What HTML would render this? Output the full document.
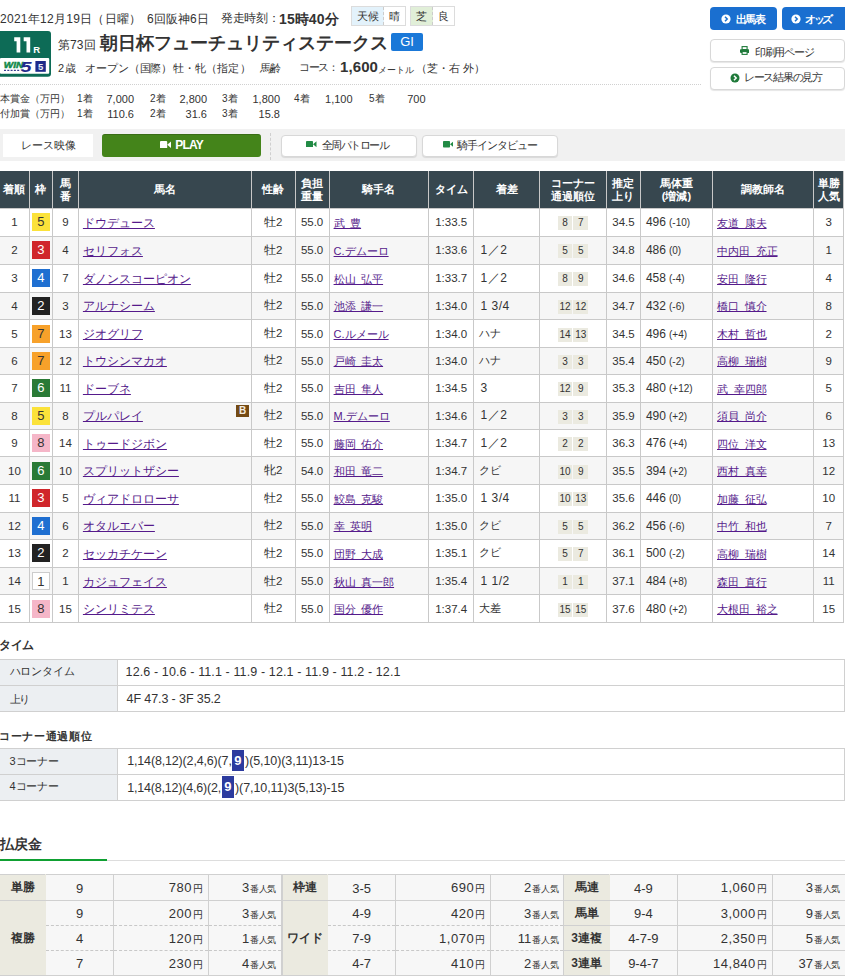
<!DOCTYPE html>
<html lang="ja"><head><meta charset="utf-8">
<style>
*{box-sizing:border-box;margin:0;padding:0}
html,body{width:845px;height:976px;overflow:hidden;background:#fff}
body{font-family:"Liberation Sans",sans-serif;color:#333;font-size:12px;position:relative}
.abs{position:absolute;white-space:nowrap}
a{color:#551a8b;text-decoration:underline}
/* header */
.t12{font-size:12px;line-height:14px}
.wx{position:absolute;top:6px;height:20px;border:1px solid #dcdcdc;font-size:11px;line-height:18px;background:#fff}
.wx span{position:absolute;top:0;height:18px;text-align:center}
.racebox{left:0;top:31px;width:51px;height:46px;background:#0e6b57;border-radius:0 5px 5px 0}
.racebox .num{position:absolute;left:14px;top:3px;color:#fff;font-weight:bold;font-size:21px;line-height:22px;letter-spacing:-1px}
.racebox .num small{font-size:9px;letter-spacing:0;margin-left:2px}
.racebox .w5{position:absolute;left:0;top:26px;width:49px;height:17px;background:#fff;border-radius:0 0 3px 0}
.gi{position:absolute;left:391px;top:33px;width:32px;height:17.7px;background:#1a78d8;color:#fff;font-size:13px;line-height:17.7px;text-align:center;border-radius:2px}
.dots{left:0;top:84px;width:701px;border-top:1px dotted #d0d0d0}
.btn{position:absolute;border-radius:4px;text-align:center;font-size:12px;white-space:nowrap}
.bb{background:#1a6fd0;color:#fff;font-weight:bold}
.bwh{background:#fff;border:1px solid #d8d8d8;color:#333;box-shadow:0 1px 1px rgba(0,0,0,.10)}
/* video band */
.band{left:0;top:129px;width:845px;height:32px;background:#f1f1f1}
/* result table */
table.res{position:absolute;left:0;top:171px;border-collapse:collapse;table-layout:fixed;width:844px}
table.res th{background:#37474f;color:#fff;font-weight:bold;font-size:11px;line-height:13px;height:37px;border-left:1px solid #c8c8c8;border-right:1px solid #c8c8c8;text-align:center;padding:1px 0 0 0}
table.res th:first-child{border-left:none}
table.res td{border:1px solid #c9c9c9;font-size:11.5px;padding:0;white-space:nowrap;overflow:hidden}
table.res td:first-child{border-left:none}
table.res tr.ev td{background:#f6f6f6}
td.c{text-align:center}
td.nm{padding-left:4px!important;position:relative;font-size:11.7px!important;padding-top:2px!important}
td.jk{padding-left:4px!important;font-size:11px!important;padding-top:2px!important}
td.mg{padding-left:4px!important;font-size:11px!important}
.mgd{font-size:12px;margin-left:2px;letter-spacing:0.5px}
.mgj{font-size:10.5px;margin-left:0.5px}
td.bw{padding-left:5px!important;font-size:12px!important}
td.bw small{font-size:10px;margin-left:3px}
.wk{display:inline-block;width:18px;height:18px;line-height:18px;text-align:center;font-size:13px;vertical-align:middle}
.cn{display:inline-block;width:14.7px;height:14px;line-height:14px;background:#ebeae0;font-size:10px;margin:0 0.5px;vertical-align:middle;text-align:center;position:relative;top:1px}
.blk{position:absolute;right:1.5px;top:2.5px;width:13.8px;height:12.3px;background:#744a14;color:#f4ece0;font-size:10px;line-height:12.3px;text-align:center;font-weight:bold}
/* time */
.h3{left:0;font-size:13px;font-weight:bold;line-height:16px}
table.info{position:absolute;left:0;width:845px;border-collapse:collapse;table-layout:fixed}
table.info th{width:117px;background:#eceff2;border:1px solid #d0d0d0;border-left:none;font-weight:normal;text-align:left;padding-left:10px;font-size:12px;height:26px}
table.info td{border:1px solid #d0d0d0;padding-left:10px;font-size:12.5px;height:26px}
.hl{display:inline-block;background:#2c3aa8;color:#fff;font-weight:bold;width:12px;text-align:center;height:23px;line-height:23px;vertical-align:middle}
.payh{left:0;top:834px;font-size:14px;font-weight:bold;line-height:18px}
.gline{left:0;top:860px;width:845px;height:1px;background:#ddd}
.gline2{left:0;top:859px;width:107px;height:2px;background:#0fa032}
/* payout */
table.pay{position:absolute;top:874px;border-collapse:collapse;table-layout:fixed;width:282px}
table.pay td,table.pay th{border:1px solid #d0d0d0;font-size:13px;padding:1px 0 0 0;white-space:nowrap;color:#333}
table.pay th{background:#ebeae0;font-weight:bold;text-align:center;font-size:12px;border-right-color:#ebeae0;padding-top:0}
table.pay th.first{border-left:none}
table.pay td{background:#f7f7f7}
table.pay td.n{text-align:center}
table.pay td.y{text-align:right;padding-right:5px;letter-spacing:0.5px}
table.pay td.y small{font-size:9.5px;margin-left:1px;letter-spacing:0}
table.pay td.p{text-align:right;padding-right:5px}
table.pay td.p small{font-size:9px;margin-left:1px;letter-spacing:-0.4px}
table.pay tr.dt td{border-top:1px dashed #c8c8c8}
table.pay tr.db td{border-bottom:1px dashed #c8c8c8}
</style></head><body>

<div class="abs" id="s_d1" style="z-index:5;left:0.0px;top:12.0px;font-size:12px;line-height:14px;font-weight:400;letter-spacing:0.272px;">2021年12月19日（日曜）</div>
<div class="abs" id="s_d2" style="z-index:5;left:147.0px;top:12.0px;font-size:12px;line-height:14px;font-weight:400;letter-spacing:0.06px;">6回阪神6日</div>
<div class="abs" id="s_d3" style="z-index:5;left:221.0px;top:11.25px;font-size:12px;line-height:14px;font-weight:400;letter-spacing:-0.35px;">発走時刻：</div>
<div class="abs" id="s_d4" style="z-index:5;left:279px;top:10.5px;font-size:14px;line-height:16px;font-weight:700;letter-spacing:0.1px;">15時40分</div>
<div class="abs" id="s_t1" style="z-index:5;left:58.0px;top:38.0px;font-size:12px;line-height:14px;font-weight:400;letter-spacing:0.097px;">第73回</div>
<div class="abs" id="s_t2" style="z-index:5;left:100.0px;top:32.5px;font-size:18px;line-height:20px;font-weight:700;letter-spacing:0.021px;">朝日杯フューチュリティステークス</div>
<div class="abs" id="s_u1" style="z-index:5;left:58.0px;top:62.25px;font-size:11px;line-height:13px;font-weight:400;letter-spacing:1.2px;">2歳</div>
<div class="abs" id="s_u2" style="z-index:5;left:85.0px;top:62.25px;font-size:11px;line-height:13px;font-weight:400;letter-spacing:-0.139px;">オープン</div>
<div class="abs" id="s_u3" style="z-index:5;left:129.0px;top:62.25px;font-size:11px;line-height:13px;font-weight:400;letter-spacing:-0.372px;">（国際）</div>
<div class="abs" id="s_u4" style="z-index:5;left:173.0px;top:62.25px;font-size:11px;line-height:13px;font-weight:400;letter-spacing:-0.25px;">牡・牝</div>
<div class="abs" id="s_u5" style="z-index:5;left:206px;top:62.25px;font-size:11px;line-height:13px;font-weight:400;letter-spacing:0.236px;">（指定）</div>
<div class="abs" id="s_u6" style="z-index:5;left:260px;top:62.25px;font-size:11px;line-height:13px;font-weight:400;letter-spacing:-0.7px;">馬齢</div>
<div class="abs" id="s_u7" style="z-index:5;left:299px;top:61.25px;font-size:11px;line-height:13px;font-weight:400;letter-spacing:-1.334px;">コース：</div>
<div class="abs" id="s_u8" style="z-index:5;left:340.0px;top:58.25px;font-size:15px;line-height:17px;font-weight:700;letter-spacing:0.1px;">1,600</div>
<div class="abs" id="s_u9" style="z-index:5;left:378.0px;top:64.75px;font-size:9px;line-height:11px;font-weight:400;letter-spacing:0.066px;">メートル</div>
<div class="abs" id="s_u10" style="z-index:5;left:415.6px;top:61.6px;font-size:11px;line-height:13px;font-weight:400;letter-spacing:0.019px;">（芝・右 外）</div>
<div class="abs" id="s_b1" style="z-index:5;left:735.6px;top:13.45px;font-size:10.5px;line-height:12.5px;font-weight:700;letter-spacing:-1.5px;color:#fff">出馬表</div>
<div class="abs" id="s_b2" style="z-index:5;left:805px;top:13.45px;font-size:10.5px;line-height:12.5px;font-weight:700;letter-spacing:-2.3px;color:#fff">オッズ</div>
<div class="abs" id="s_b3" style="z-index:5;left:754.8px;top:45.55px;font-size:10.5px;line-height:12.5px;font-weight:400;letter-spacing:-1.2px;">印刷用ページ</div>
<div class="abs" id="s_b4" style="z-index:5;left:744px;top:71.25px;font-size:10.5px;line-height:12.5px;font-weight:400;letter-spacing:-1.285px;">レース結果の見方</div>
<div class="abs" id="s_v1" style="z-index:5;left:21.2px;top:139.05px;font-size:11px;line-height:13px;font-weight:400;letter-spacing:0.0px;">レース映像</div>
<div class="abs" id="s_v2" style="z-index:5;left:175.2px;top:138.0px;font-size:12px;line-height:14px;font-weight:700;letter-spacing:-0.737px;color:#fff">PLAY</div>
<div class="abs" id="s_v3" style="z-index:5;left:321.5px;top:138.65px;font-size:10.5px;line-height:12.5px;font-weight:400;letter-spacing:-1.469px;">全周パトロール</div>
<div class="abs" id="s_v4" style="z-index:5;left:456.9px;top:138.85px;font-size:10.5px;line-height:12.5px;font-weight:400;letter-spacing:-1.055px;">騎手インタビュー</div>
<div class="abs" id="s_h1" style="z-index:5;left:-1px;top:638.95px;font-size:11.5px;line-height:13.5px;font-weight:700;letter-spacing:-0.5px;">タイム</div>
<div class="abs" id="s_h2" style="z-index:5;left:-1px;top:730.05px;font-size:11px;line-height:13px;font-weight:700;letter-spacing:0.692px;">コーナー通過順位</div>
<div class="abs" id="s_h3" style="z-index:5;left:0px;top:837.05px;font-size:13.5px;line-height:15.5px;font-weight:700;letter-spacing:-0.1px;">払戻金</div>
<div class="abs" id="s_i1" style="z-index:5;left:9.5px;top:665.25px;font-size:11px;line-height:13px;font-weight:400;letter-spacing:-0.16px;">ハロンタイム</div>
<div class="abs" id="s_i2" style="z-index:5;left:125.6px;top:665.47px;font-size:12.5px;line-height:14.5px;font-weight:400;letter-spacing:0.119px;">12.6 - 10.6 - 11.1 - 11.9 - 12.1 - 11.9 - 11.2 - 12.1</div>
<div class="abs" id="s_i3" style="z-index:5;left:10.1px;top:692.75px;font-size:11px;line-height:13px;font-weight:400;letter-spacing:-2.0px;">上り</div>
<div class="abs" id="s_i4" style="z-index:5;left:126.6px;top:691.88px;font-size:12.5px;line-height:14.5px;font-weight:400;letter-spacing:-0.104px;">4F 47.3 - 3F 35.2</div>
<div class="abs" id="s_i5" style="z-index:5;left:9.5px;top:755.25px;font-size:11px;line-height:13px;font-weight:400;letter-spacing:-0.1px;">3コーナー</div>
<div class="abs" id="s_i6" style="z-index:5;left:9.5px;top:780.45px;font-size:11px;line-height:13px;font-weight:400;letter-spacing:-0.1px;">4コーナー</div>
<div class="abs" id="s_k1" style="z-index:5;left:127.2px;top:754.47px;font-size:12.5px;line-height:14.5px;font-weight:400;letter-spacing:-0.158px;">1,14(8,12)(2,4,6)(7,</div>
<div class="abs" id="s_k2" style="z-index:5;left:245.1px;top:754.47px;font-size:12.5px;line-height:14.5px;font-weight:400;letter-spacing:-0.099px;">)(5,10)(3,11)13-15</div>
<div class="abs" id="s_k3" style="z-index:5;left:127.2px;top:780.68px;font-size:12.5px;line-height:14.5px;font-weight:400;letter-spacing:-0.187px;">1,14(8,12)(4,6)(2,</div>
<div class="abs" id="s_k4" style="z-index:5;left:235px;top:780.68px;font-size:12.5px;line-height:14.5px;font-weight:400;letter-spacing:-0.082px;">)(7,10,11)3(5,13)-15</div>
<div class="wx" style="left:351px;width:55px"><span style="left:0;width:32px;background:#e3f2fb;border-right:1px dashed #ccc">天候</span><span style="left:32px;width:21px">晴</span></div>
<div class="wx" style="left:410px;width:45px"><span style="left:0;width:22px;background:#e1efd8;border-right:1px dashed #ccc">芝</span><span style="left:22px;width:21px">良</span></div>

<svg class="abs" style="left:0;top:0" width="56" height="80" viewBox="0 0 56 80">
<path d="M0 31 H48 Q51 31 51 34 V73.5 Q51 76.8 47.8 76.8 H0 Z" fill="#0d6b56"/>
<rect x="0" y="58" width="49.2" height="15.7" rx="1" fill="#fff"/>
<path d="M14.2 37.2 H20.3 V52.6 H16.6 V41.2 H14.2 Z" fill="#fff"/>
<path d="M23.7 37.2 H30.2 V52.6 H26.5 V41.2 H23.7 Z" fill="#fff"/>
<text x="33.3" y="52.6" font-family="Liberation Sans" font-weight="bold" font-size="9.5" fill="#fff">R</text>
<text x="3.8" y="67.9" font-family="Liberation Sans" font-weight="bold" font-style="italic" font-size="8.8" fill="#12894a" stroke="#12894a" stroke-width="0.5" textLength="19.5" lengthAdjust="spacingAndGlyphs">WIN</text>
<text x="20.5" y="71.8" font-family="Liberation Sans" font-weight="bold" font-style="italic" font-size="14.5" fill="#23288c" textLength="11" lengthAdjust="spacingAndGlyphs">5</text>
<path d="M4 70.3 H20" stroke="#3a4090" stroke-width="1.2" stroke-dasharray="2 1.3"/>
<rect x="35.4" y="61" width="10.4" height="10.8" fill="#1d2a8a"/>
<text x="40.6" y="70" text-anchor="middle" font-family="Liberation Sans" font-weight="bold" font-size="9.5" fill="#e8ecf8">5</text>
</svg>
<div class="gi">GI</div>
<div class="abs dots"></div>

<div class="abs" style="left:0;top:93px;font-size:10px;line-height:12px">本賞金（万円）</div>
<div class="abs" style="left:0;top:108px;font-size:10px;line-height:12px">付加賞（万円）</div>
<div class="abs" style="left:77px;top:93px;font-size:10px;line-height:12px">1着</div>
<div class="abs" style="left:94px;width:40px;text-align:right;top:93px;font-size:11px;line-height:12px">7,000</div>
<div class="abs" style="left:150px;top:93px;font-size:10px;line-height:12px">2着</div>
<div class="abs" style="left:167px;width:40px;text-align:right;top:93px;font-size:11px;line-height:12px">2,800</div>
<div class="abs" style="left:222px;top:93px;font-size:10px;line-height:12px">3着</div>
<div class="abs" style="left:240px;width:40px;text-align:right;top:93px;font-size:11px;line-height:12px">1,800</div>
<div class="abs" style="left:294px;top:93px;font-size:10px;line-height:12px">4着</div>
<div class="abs" style="left:312.6px;width:40px;text-align:right;top:93px;font-size:11px;line-height:12px">1,100</div>
<div class="abs" style="left:369px;top:93px;font-size:10px;line-height:12px">5着</div>
<div class="abs" style="left:385.5px;width:40px;text-align:right;top:93px;font-size:11px;line-height:12px">700</div>
<div class="abs" style="left:77px;top:108px;font-size:10px;line-height:12px">1着</div>
<div class="abs" style="left:94px;width:40px;text-align:right;top:108px;font-size:11px;line-height:12px">110.6</div>
<div class="abs" style="left:150px;top:108px;font-size:10px;line-height:12px">2着</div>
<div class="abs" style="left:167px;width:40px;text-align:right;top:108px;font-size:11px;line-height:12px">31.6</div>
<div class="abs" style="left:222px;top:108px;font-size:10px;line-height:12px">3着</div>
<div class="abs" style="left:240px;width:40px;text-align:right;top:108px;font-size:11px;line-height:12px">15.8</div>

<div class="btn bb" style="left:710px;top:7px;width:67px;height:23px"></div>
<div class="btn bb" style="left:782px;top:7px;width:67px;height:23px"></div>
<div class="btn bwh" style="left:710px;top:39px;width:135px;height:23px"></div>
<div class="btn bwh" style="left:710px;top:67px;width:135px;height:23px"></div>
<svg class="abs" style="left:721px;top:14px" width="10" height="10" viewBox="0 0 10 10"><circle cx="5" cy="5" r="4.6" fill="#fff"/><path d="M4 2.8 L6.2 5 L4 7.2" stroke="#1a6fd0" stroke-width="1.5" fill="none"/></svg>
<svg class="abs" style="left:791px;top:14px" width="10" height="10" viewBox="0 0 10 10"><circle cx="5" cy="5" r="4.6" fill="#fff"/><path d="M4 2.8 L6.2 5 L4 7.2" stroke="#1a6fd0" stroke-width="1.5" fill="none"/></svg>
<svg class="abs" style="left:740px;top:46px" width="9.2" height="9" viewBox="0 0 9.2 9"><rect x="2.1" y="0.6" width="5" height="3" fill="#fff" stroke="#1f7a3a" stroke-width="1.1"/><rect x="0" y="3.3" width="9.2" height="3.6" rx="0.8" fill="#1f7a3a"/><rect x="2.1" y="5.6" width="5" height="2.8" fill="#fff" stroke="#1f7a3a" stroke-width="1.1"/></svg>
<svg class="abs" style="left:730px;top:72.5px" width="10" height="10" viewBox="0 0 10 10"><circle cx="5" cy="5" r="4.5" fill="#1f7a3a"/><path d="M4 2.8 L6.2 5 L4 7.2" stroke="#fff" stroke-width="1.5" fill="none"/></svg>

<div class="abs band"></div>
<div class="abs" style="left:3px;top:134px;width:90px;height:23px;background:#fff"></div>
<div class="btn" style="left:102px;top:134px;width:159px;height:22.5px;background:#44841a;border-top:1px solid #3a6d16;border-radius:3px"></div>
<svg class="abs" style="left:160px;top:140.5px" width="11" height="7.5" viewBox="0 0 11 7.5"><rect x="0" y="0" width="7.2" height="7.5" rx="1" fill="#fff"/><path d="M7.2 3.75 L11 0.5 L11 7 Z" fill="#fff"/></svg>
<div class="abs" style="left:270px;top:133px;height:27px;border-left:1px dashed #cfcfcf"></div>
<div class="btn bwh" style="left:281px;top:134.5px;width:136px;height:22px"></div>
<div class="btn bwh" style="left:422px;top:134.5px;width:136px;height:22px"></div>
<svg class="abs" style="left:306px;top:140.8px" width="10.5" height="6.5" viewBox="0 0 10.5 6.5"><rect x="0" y="0" width="7" height="6.5" rx="0.8" fill="#228b45"/><path d="M7 3.25 L10.5 0.3 L10.5 6.2 Z" fill="#228b45"/></svg>
<svg class="abs" style="left:442.5px;top:141px" width="10.5" height="6.5" viewBox="0 0 10.5 6.5"><rect x="0" y="0" width="7" height="6.5" rx="0.8" fill="#228b45"/><path d="M7 3.25 L10.5 0.3 L10.5 6.2 Z" fill="#228b45"/></svg>

<table class="res"><colgroup><col style="width:29.4px"><col style="width:23.0px"><col style="width:26.0px"><col style="width:173.0px"><col style="width:43.7px"><col style="width:34.0px"><col style="width:99.3px"><col style="width:45.6px"><col style="width:65.2px"><col style="width:67.4px"><col style="width:33.9px"><col style="width:72.1px"><col style="width:101.0px"><col style="width:30.4px"></colgroup>
<tr><th>着順</th><th>枠</th><th>馬<br>番</th><th>馬名</th><th>性齢</th><th>負担<br>重量</th><th>騎手名</th><th>タイム</th><th>着差</th><th>コーナー<br>通過順位</th><th>推定<br>上り</th><th>馬体重<br>(増減)</th><th>調教師名</th><th>単勝<br>人気</th></tr>
<tr class="" style="height:28.2px"><td class="c">1</td><td class="c"><span class="wk" style="background:#fbe23a;color:#333;border:none">5</span></td><td class="c">9</td><td class="nm"><a>ドウデュース</a></td><td class="c">牡2</td><td class="c">55.0</td><td class="jk"><a>武&ensp;豊</a></td><td class="c tm">1:33.5</td><td class="mg"></td><td class="c"><span class="cn">8</span><span class="cn">7</span></td><td class="c">34.5</td><td class="bw">496<small>(-10)</small></td><td class="jk"><a>友道&ensp;康夫</a></td><td class="c">3</td></tr>
<tr class="ev" style="height:28.2px"><td class="c">2</td><td class="c"><span class="wk" style="background:#d0262b;color:#fff;border:none">3</span></td><td class="c">4</td><td class="nm"><a>セリフォス</a></td><td class="c">牡2</td><td class="c">55.0</td><td class="jk"><a>C.デムーロ</a></td><td class="c tm">1:33.6</td><td class="mg"><span class="mgd">1／2</span></td><td class="c"><span class="cn">5</span><span class="cn">5</span></td><td class="c">34.8</td><td class="bw">486<small>(0)</small></td><td class="jk"><a>中内田&ensp;充正</a></td><td class="c">1</td></tr>
<tr class="" style="height:27.7px"><td class="c">3</td><td class="c"><span class="wk" style="background:#1f6fd1;color:#fff;border:none">4</span></td><td class="c">7</td><td class="nm"><a>ダノンスコーピオン</a></td><td class="c">牡2</td><td class="c">55.0</td><td class="jk"><a>松山&ensp;弘平</a></td><td class="c tm">1:33.7</td><td class="mg"><span class="mgd">1／2</span></td><td class="c"><span class="cn">8</span><span class="cn">9</span></td><td class="c">34.6</td><td class="bw">458<small>(-4)</small></td><td class="jk"><a>安田&ensp;隆行</a></td><td class="c">4</td></tr>
<tr class="ev" style="height:27.8px"><td class="c">4</td><td class="c"><span class="wk" style="background:#222;color:#fff;border:none">2</span></td><td class="c">3</td><td class="nm"><a>アルナシーム</a></td><td class="c">牡2</td><td class="c">55.0</td><td class="jk"><a>池添&ensp;謙一</a></td><td class="c tm">1:34.0</td><td class="mg"><span class="mgd">1&nbsp;3/4</span></td><td class="c"><span class="cn">12</span><span class="cn">12</span></td><td class="c">34.7</td><td class="bw">432<small>(-6)</small></td><td class="jk"><a>橋口&ensp;慎介</a></td><td class="c">8</td></tr>
<tr class="" style="height:27.5px"><td class="c">5</td><td class="c"><span class="wk" style="background:#f7a12a;color:#333;border:none">7</span></td><td class="c">13</td><td class="nm"><a>ジオグリフ</a></td><td class="c">牡2</td><td class="c">55.0</td><td class="jk"><a>C.ルメール</a></td><td class="c tm">1:34.0</td><td class="mg"><span class="mgj">ハナ</span></td><td class="c"><span class="cn">14</span><span class="cn">13</span></td><td class="c">34.5</td><td class="bw">496<small>(+4)</small></td><td class="jk"><a>木村&ensp;哲也</a></td><td class="c">2</td></tr>
<tr class="ev" style="height:27.0px"><td class="c">6</td><td class="c"><span class="wk" style="background:#f7a12a;color:#333;border:none">7</span></td><td class="c">12</td><td class="nm"><a>トウシンマカオ</a></td><td class="c">牡2</td><td class="c">55.0</td><td class="jk"><a>戸崎&ensp;圭太</a></td><td class="c tm">1:34.0</td><td class="mg"><span class="mgj">ハナ</span></td><td class="c"><span class="cn">3</span><span class="cn">3</span></td><td class="c">35.4</td><td class="bw">450<small>(-2)</small></td><td class="jk"><a>高柳&ensp;瑞樹</a></td><td class="c">9</td></tr>
<tr class="" style="height:27.7px"><td class="c">7</td><td class="c"><span class="wk" style="background:#2a7a36;color:#fff;border:none">6</span></td><td class="c">11</td><td class="nm"><a>ドーブネ</a></td><td class="c">牡2</td><td class="c">55.0</td><td class="jk"><a>吉田&ensp;隼人</a></td><td class="c tm">1:34.5</td><td class="mg"><span class="mgd">3</span></td><td class="c"><span class="cn">12</span><span class="cn">9</span></td><td class="c">35.3</td><td class="bw">480<small>(+12)</small></td><td class="jk"><a>武&ensp;幸四郎</a></td><td class="c">5</td></tr>
<tr class="ev" style="height:27.1px"><td class="c">8</td><td class="c"><span class="wk" style="background:#fbe23a;color:#333;border:none">5</span></td><td class="c">8</td><td class="nm"><a>プルパレイ</a><span class="blk">B</span></td><td class="c">牡2</td><td class="c">55.0</td><td class="jk"><a>M.デムーロ</a></td><td class="c tm">1:34.6</td><td class="mg"><span class="mgd">1／2</span></td><td class="c"><span class="cn">3</span><span class="cn">3</span></td><td class="c">35.9</td><td class="bw">490<small>(+2)</small></td><td class="jk"><a>須貝&ensp;尚介</a></td><td class="c">6</td></tr>
<tr class="" style="height:27.8px"><td class="c">9</td><td class="c"><span class="wk" style="background:#f5b6c8;color:#333;border:none">8</span></td><td class="c">14</td><td class="nm"><a>トゥードジボン</a></td><td class="c">牡2</td><td class="c">55.0</td><td class="jk"><a>藤岡&ensp;佑介</a></td><td class="c tm">1:34.7</td><td class="mg"><span class="mgd">1／2</span></td><td class="c"><span class="cn">2</span><span class="cn">2</span></td><td class="c">36.3</td><td class="bw">476<small>(+4)</small></td><td class="jk"><a>四位&ensp;洋文</a></td><td class="c">13</td></tr>
<tr class="ev" style="height:27.5px"><td class="c">10</td><td class="c"><span class="wk" style="background:#2a7a36;color:#fff;border:none">6</span></td><td class="c">10</td><td class="nm"><a>スプリットザシー</a></td><td class="c">牝2</td><td class="c">54.0</td><td class="jk"><a>和田&ensp;竜二</a></td><td class="c tm">1:34.7</td><td class="mg"><span class="mgj">クビ</span></td><td class="c"><span class="cn">10</span><span class="cn">9</span></td><td class="c">35.5</td><td class="bw">394<small>(+2)</small></td><td class="jk"><a>西村&ensp;真幸</a></td><td class="c">12</td></tr>
<tr class="" style="height:27.6px"><td class="c">11</td><td class="c"><span class="wk" style="background:#d0262b;color:#fff;border:none">3</span></td><td class="c">5</td><td class="nm"><a>ヴィアドロローサ</a></td><td class="c">牡2</td><td class="c">55.0</td><td class="jk"><a>鮫島&ensp;克駿</a></td><td class="c tm">1:35.0</td><td class="mg"><span class="mgd">1&nbsp;3/4</span></td><td class="c"><span class="cn">10</span><span class="cn">13</span></td><td class="c">35.6</td><td class="bw">446<small>(0)</small></td><td class="jk"><a>加藤&ensp;征弘</a></td><td class="c">10</td></tr>
<tr class="ev" style="height:27.4px"><td class="c">12</td><td class="c"><span class="wk" style="background:#1f6fd1;color:#fff;border:none">4</span></td><td class="c">6</td><td class="nm"><a>オタルエバー</a></td><td class="c">牡2</td><td class="c">55.0</td><td class="jk"><a>幸&ensp;英明</a></td><td class="c tm">1:35.0</td><td class="mg"><span class="mgj">クビ</span></td><td class="c"><span class="cn">5</span><span class="cn">5</span></td><td class="c">36.2</td><td class="bw">456<small>(-6)</small></td><td class="jk"><a>中竹&ensp;和也</a></td><td class="c">7</td></tr>
<tr class="" style="height:28.0px"><td class="c">13</td><td class="c"><span class="wk" style="background:#222;color:#fff;border:none">2</span></td><td class="c">2</td><td class="nm"><a>セッカチケーン</a></td><td class="c">牡2</td><td class="c">55.0</td><td class="jk"><a>団野&ensp;大成</a></td><td class="c tm">1:35.1</td><td class="mg"><span class="mgj">クビ</span></td><td class="c"><span class="cn">5</span><span class="cn">7</span></td><td class="c">36.1</td><td class="bw">500<small>(-2)</small></td><td class="jk"><a>高柳&ensp;瑞樹</a></td><td class="c">14</td></tr>
<tr class="ev" style="height:27.3px"><td class="c">14</td><td class="c"><span class="wk" style="background:#fff;color:#333;border:1px solid #ccc">1</span></td><td class="c">1</td><td class="nm"><a>カジュフェイス</a></td><td class="c">牡2</td><td class="c">55.0</td><td class="jk"><a>秋山&ensp;真一郎</a></td><td class="c tm">1:35.4</td><td class="mg"><span class="mgd">1&nbsp;1/2</span></td><td class="c"><span class="cn">1</span><span class="cn">1</span></td><td class="c">37.1</td><td class="bw">484<small>(+8)</small></td><td class="jk"><a>森田&ensp;直行</a></td><td class="c">11</td></tr>
<tr class="" style="height:27.6px"><td class="c">15</td><td class="c"><span class="wk" style="background:#f5b6c8;color:#333;border:none">8</span></td><td class="c">15</td><td class="nm"><a>シンリミテス</a></td><td class="c">牡2</td><td class="c">55.0</td><td class="jk"><a>国分&ensp;優作</a></td><td class="c tm">1:37.4</td><td class="mg"><span class="mgj">大差</span></td><td class="c"><span class="cn">15</span><span class="cn">15</span></td><td class="c">37.6</td><td class="bw">480<small>(+2)</small></td><td class="jk"><a>大根田&ensp;裕之</a></td><td class="c">15</td></tr>
</table>


<table class="info" style="top:659px">
<tr><th></th><td></td></tr>
<tr><th></th><td></td></tr>
</table>
<table class="info" style="top:748px">
<tr><th></th><td></td></tr>
<tr><th></th><td></td></tr>
</table>
<div class="abs" style="z-index:4;left:232.1px;top:750px;width:11.7px;height:21.3px;background:#2c3b9e"></div>
<div class="abs" style="z-index:4;left:222.3px;top:776px;width:11.3px;height:21.6px;background:#2c3b9e"></div>
<div class="abs" style="z-index:6;left:232.1px;top:750px;width:11.7px;height:21.3px;color:#fff;font-weight:bold;font-size:13px;line-height:21.3px;text-align:center">9</div>
<div class="abs" style="z-index:6;left:222.3px;top:776px;width:11.3px;height:21.6px;color:#fff;font-weight:bold;font-size:13px;line-height:21.6px;text-align:center">9</div>
<div class="abs gline"></div>
<div class="abs gline2"></div>

<table class="pay" style="left:0px"><colgroup><col style="width:45.5px"><col style="width:68px"><col style="width:95px"><col style="width:73px"></colgroup><tr class="" style="height:26px"><th rowspan="1" class="first">単勝</th><td class="n">9</td><td class="y">780<small>円</small></td><td class="p">3<small>番人気</small></td></tr><tr class="db" style="height:25.3px"><th rowspan="3" class="first">複勝</th><td class="n">9</td><td class="y">200<small>円</small></td><td class="p">3<small>番人気</small></td></tr><tr class="dt db" style="height:25px"><td class="n">4</td><td class="y">120<small>円</small></td><td class="p">1<small>番人気</small></td></tr><tr class="dt" style="height:25px"><td class="n">7</td><td class="y">230<small>円</small></td><td class="p">4<small>番人気</small></td></tr></table>
<table class="pay" style="left:281.67px"><colgroup><col style="width:45.5px"><col style="width:68px"><col style="width:95px"><col style="width:73px"></colgroup><tr class="" style="height:26px"><th rowspan="1">枠連</th><td class="n">3-5</td><td class="y">690<small>円</small></td><td class="p">2<small>番人気</small></td></tr><tr class="db" style="height:25.3px"><th rowspan="3">ワイド</th><td class="n">4-9</td><td class="y">420<small>円</small></td><td class="p">3<small>番人気</small></td></tr><tr class="dt db" style="height:25px"><td class="n">7-9</td><td class="y">1,070<small>円</small></td><td class="p">11<small>番人気</small></td></tr><tr class="dt" style="height:25px"><td class="n">4-7</td><td class="y">410<small>円</small></td><td class="p">2<small>番人気</small></td></tr></table>
<table class="pay" style="left:563.33px"><colgroup><col style="width:45.5px"><col style="width:68px"><col style="width:95px"><col style="width:73px"></colgroup><tr class="" style="height:26px"><th rowspan="1">馬連</th><td class="n">4-9</td><td class="y">1,060<small>円</small></td><td class="p">3<small>番人気</small></td></tr><tr class="" style="height:25.3px"><th rowspan="1">馬単</th><td class="n">9-4</td><td class="y">3,000<small>円</small></td><td class="p">9<small>番人気</small></td></tr><tr class="" style="height:25px"><th rowspan="1">3連複</th><td class="n">4-7-9</td><td class="y">2,350<small>円</small></td><td class="p">5<small>番人気</small></td></tr><tr class="" style="height:25px"><th rowspan="1">3連単</th><td class="n">9-4-7</td><td class="y">14,840<small>円</small></td><td class="p">37<small>番人気</small></td></tr></table>

</body></html>
